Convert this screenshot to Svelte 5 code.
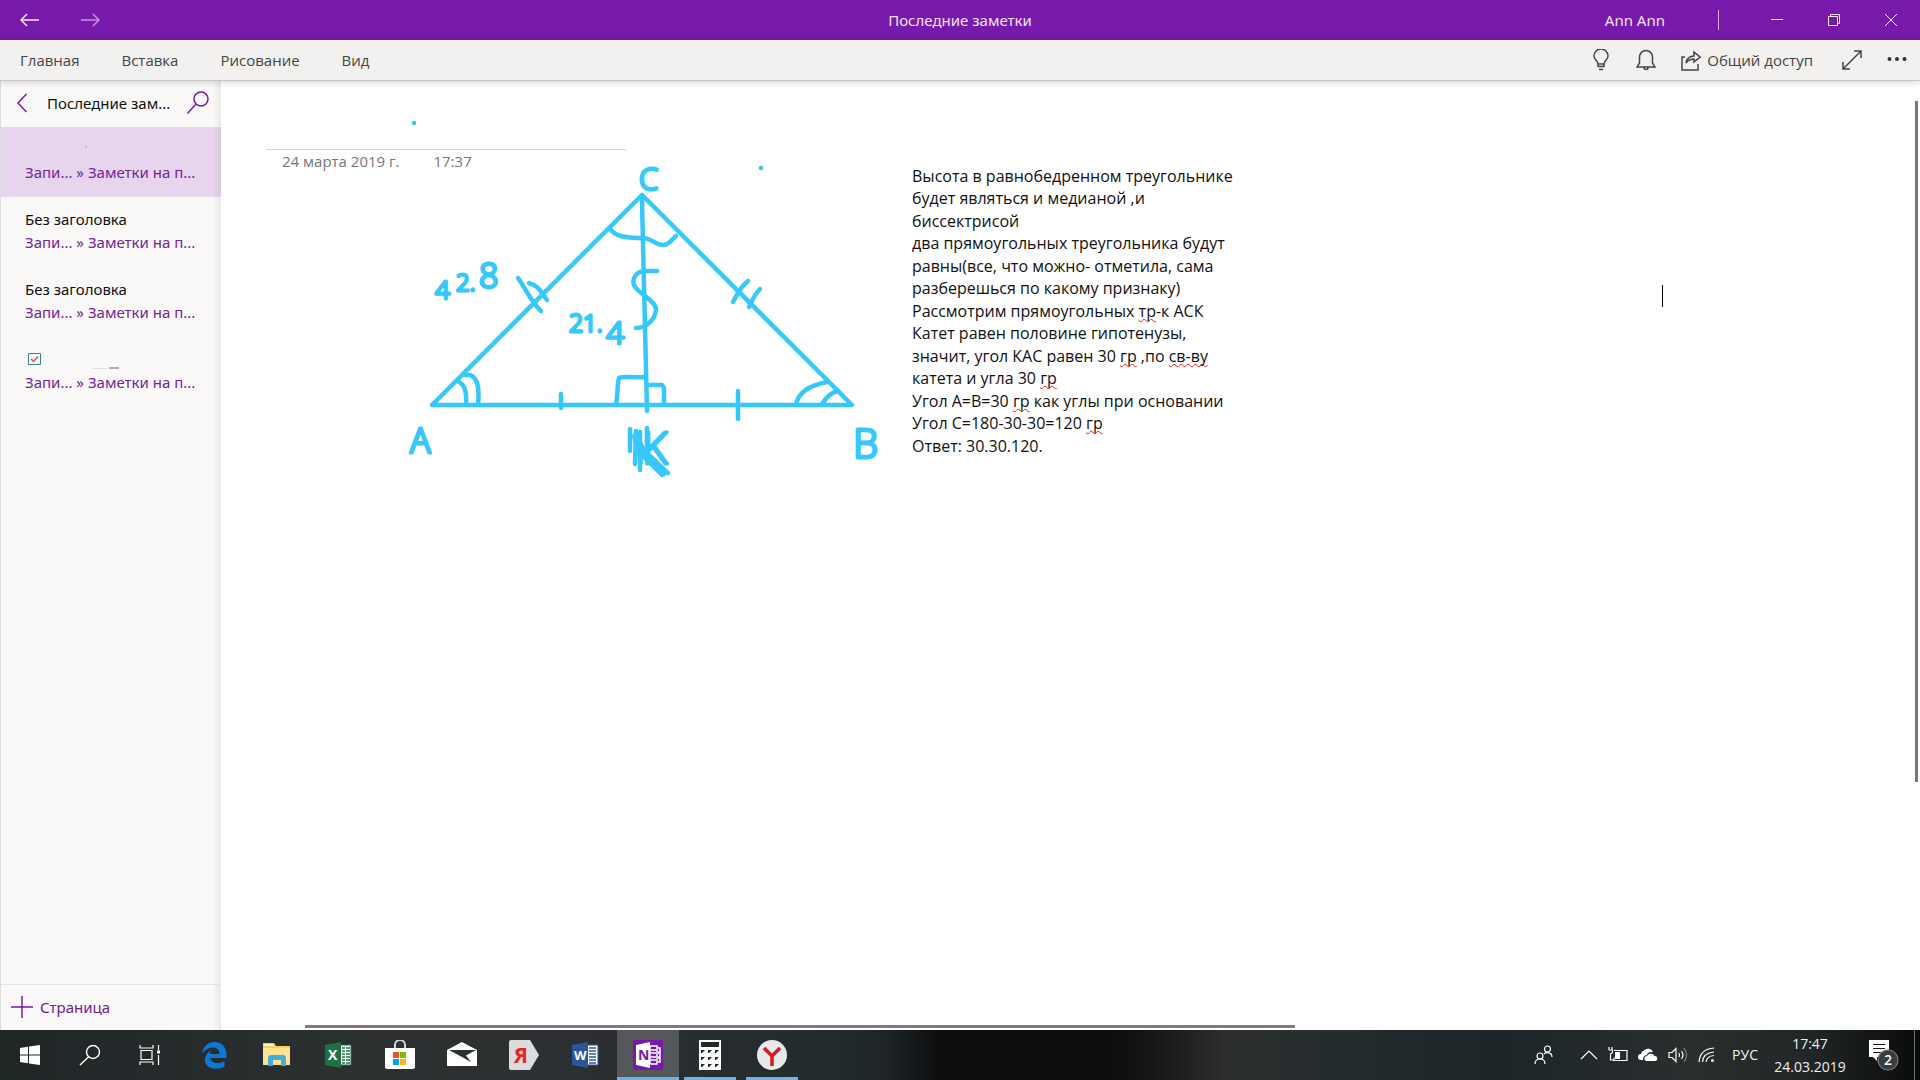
<script lang="ts">
  const tabs = ['Главная', 'Вставка', 'Рисование', 'Вид'];

  const pages = [
    { title: '', kind: 'blank', active: true },
    { title: 'Без заголовка', kind: 'text', active: false },
    { title: 'Без заголовка', kind: 'text', active: false },
    { title: '', kind: 'check', active: false },
  ];

  // misspelled words carry the red underline
  const note = [
    [{ t: 'Высота в равнобедренном треугольнике' }],
    [{ t: 'будет являться и медианой ,и' }],
    [{ t: 'биссектрисой' }],
    [{ t: 'два прямоугольных треугольника будут' }],
    [{ t: 'равны(все, что можно- отметила, сама' }],
    [{ t: 'разберешься по какому признаку)' }],
    [{ t: 'Рассмотрим прямоугольных ' }, { t: 'тр', bad: true }, { t: '-к АСК' }],
    [{ t: 'Катет равен половине гипотенузы,' }],
    [{ t: 'значит, угол КАС равен 30 ' }, { t: 'гр', bad: true }, { t: ' ,по ' }, { t: 'св-ву', bad: true }],
    [{ t: 'катета и угла 30 ' }, { t: 'гр', bad: true }],
    [{ t: 'Угол А=В=30 ' }, { t: 'гр', bad: true }, { t: ' как углы при основании' }],
    [{ t: 'Угол С=180-30-30=120 ' }, { t: 'гр', bad: true }],
    [{ t: 'Ответ: 30.30.120.' }],
  ];
</script>

<div class="desktop">
  <header class="titlebar">
    <div class="nav">
      <button aria-label="Назад">
        <svg width="20" height="14" viewBox="0 0 20 14"><path d="M19 7H1M7 1L1 7l6 6" /></svg>
      </button>
      <button aria-label="Вперёд" class="dim">
        <svg width="20" height="14" viewBox="0 0 20 14"><path d="M1 7h18M13 1l6 6-6 6" /></svg>
      </button>
    </div>
    <h1>Последние заметки</h1>
    <div class="window-tools">
      <span class="user">Ann Ann</span>
      <span class="divider"></span>
      <button aria-label="Свернуть">
        <svg width="12" height="12" viewBox="0 0 12 12"><path d="M0 5.5h12" /></svg>
      </button>
      <button aria-label="Свернуть в окно">
        <svg width="12" height="12" viewBox="0 0 12 12"><path d="M.5 2.5h9v9h-9zM2.5 2.5v-2h9v9h-2" /></svg>
      </button>
      <button aria-label="Закрыть">
        <svg width="12" height="12" viewBox="0 0 12 12"><path d="M0 0l12 12M12 0L0 12" /></svg>
      </button>
    </div>
  </header>

  <nav class="ribbon">
    <div class="tabs">
      {#each tabs as tab}
        <button>{tab}</button>
      {/each}
    </div>
    <div class="actions">
      <button aria-label="Помощник" class="tell-me">
        <svg width="16" height="22" viewBox="0 0 16 22"><path d="M5 15c0-3-4-4-4-8a7 7 0 0 1 14 0c0 4-4 5-4 8zM5 17.5h6M6 20.5h4M5 15v3M11 15v3" /></svg>
      </button>
      <button aria-label="Уведомления">
        <svg width="20" height="22" viewBox="0 0 20 22"><path d="M1 18h18l-2.500-4V8a6.500 6.500 0 0 0-13 0v6zM8 18.500a2 2 0 0 0 4 0" /></svg>
      </button>
      <button class="share">
        <svg width="20" height="22" viewBox="0 0 20 22"><path d="M4 8H1v13h16v-6M5 14c1-5 4-7 8-7V3l6 5-6 5v-3c-3 0-6 1-8 4z" /></svg>
        <span>Общий доступ</span>
      </button>
      <button aria-label="На весь экран">
        <svg width="20" height="20" viewBox="0 0 20 20"><path d="M1 19L19 1M12 1h7v7M1 12v7h7" /></svg>
      </button>
      <button aria-label="Ещё" class="more">
        <svg width="20" height="8" viewBox="0 0 20 8"><circle cx="2.500" cy="3" r="2" /><circle cx="10" cy="3" r="2" /><circle cx="17.500" cy="3" r="2" /></svg>
      </button>
    </div>
  </nav>

  <div class="workspace">
    <aside class="sidebar">
      <div class="list-head">
        <button aria-label="К разделам">
          <svg width="11" height="20" viewBox="0 0 11 20"><path d="M10.500 1L2 10l8.500 9" /></svg>
        </button>
        <h2>Последние зам...</h2>
        <button aria-label="Поиск">
          <svg width="22" height="24" viewBox="0 0 22 24"><circle cx="14" cy="8" r="7" /><path d="M9 13L0.500 22.500" /></svg>
        </button>
      </div>
      <ul class="pages">
        {#each pages as page}
          <li class:active={page.active}>
            <div class="page-title">
              {#if page.kind === 'check'}
                <svg width="100" height="22" viewBox="0 0 100 22">
                  <path class="box" d="M3.500 5.500h12v11h-12z" />
                  <path class="tick" d="M6 11l2.500 2.500L13 8.500" />
                  <path class="dash-light" d="M68 20.500h14" />
                  <path class="dash" d="M84 20h10" />
                </svg>
              {:else if page.kind === 'blank'}
                <svg width="100" height="22" viewBox="0 0 100 22"><circle class="speck" cx="61" cy="9" r="1" /></svg>
              {:else}
                {page.title}
              {/if}
            </div>
            <a href="#page">Запи... » Заметки на п...</a>
          </li>
        {/each}
      </ul>
      <button class="add-page">
        <svg width="22" height="22" viewBox="0 0 22 22"><path d="M11 0v22M0 11h22" /></svg>
        <span>Страница</span>
      </button>
    </aside>

    <main class="canvas">
      <div class="stamp"><span>24 марта 2019 г.</span><span>17:37</span></div>

      <svg class="ink" width="520" height="400" viewBox="380 100 520 400">
        <g class="dots">
          <circle cx="414" cy="123" r="2.300" />
          <circle cx="761" cy="168" r="2.300" />
        </g>
        <g class="strokes">
          <path d="M432 405L642 195L852 405Z" />
          <path d="M642 196C643 260 645 320 647 411" />
          <path d="M610 228C613 236 625 238 642 238C653 238 655 246 664 245C670 244 672 239 676 236" />
          <path d="M657 271H646C635 271 631 280 635 287C641 295 657 302 656 310C655 319 647 328 636 328" />
          <path d="M518 278C526 289 531 302 541 311M529 283C539 286 541 292 547 300" />
          <path d="M748 281C740 287 737 295 733 302M760 289C754 295 752 301 749 307" />
          <path d="M459 382C465 385 467 393 466 405M465 375C477 373 480 386 478 405" />
          <path d="M561 394v14M738 391v28" />
          <path d="M616 405C618 395 617 385 619 378C625 376 638 378 645 377M647 385H662L664 388V404" />
          <path d="M796 404C799 393 807 386 827 382M822 404C827 396 832 392 838 391" />
        </g>
        <g class="letters">
          <text x="639" y="190" font-size="31">C</text>
          <text x="410" y="453" font-size="34">A</text>
          <text x="853" y="458" font-size="40">B</text>
          <text x="435" y="299" font-size="26">4</text>
          <text x="456" y="291" font-size="24">2.</text>
          <text x="479" y="288" font-size="34">8</text>
          <text x="569" y="332" font-size="25">2</text>
          <text x="583" y="332" font-size="24">1.</text>
          <text x="606" y="344" font-size="32">4</text>
          <text x="642" y="464" font-size="44">K</text>
        </g>
        <g class="scribble">
          <path d="M630 429V451M636 431L635 464M640 432L640 470M636 434L646 455M647 428V452" />
          <path d="M634 436L641 462M644 450L668 473M643 456L662 475M645 456L664 474M648 450L664 434" />
        </g>
      </svg>

      <div class="note">
        {#each note as line}
          <p>{#each line as part}{#if part.bad}<span class="bad">{part.t}</span>{:else}{part.t}{/if}{/each}</p>
        {/each}
      </div>
      <div class="caret"></div>
      <div class="scroll-y"></div>
      <div class="scroll-x"></div>
    </main>
  </div>

  <footer class="taskbar">
    <div class="apps">
      <button aria-label="Пуск" class="system">
        <svg width="30" height="30" viewBox="0 0 30 30"><path d="M5 8l8-1.200V14.500H5zM14 6.600L25 5v9.500H14zM5 15.500h8v7.800L5 22zM14 15.500h11V25l-11-1.600z" fill="#fff" /></svg>
      </button>
      <button aria-label="Поиск в Windows" class="system">
        <svg width="30" height="30" viewBox="0 0 30 30" stroke="#fff" stroke-width="1.400"><circle cx="18" cy="12" r="6.500" /><path d="M13.500 17L5 25" /></svg>
      </button>
      <button aria-label="Представление задач" class="system">
        <svg width="30" height="30" viewBox="0 0 30 30" stroke="#fff" stroke-width="1.200"><path d="M6 10.500h11v9H6zM5 5v3h13V5M5 25v-3h13v3M23.500 5v5M23.500 15v10" /><path d="M22 10.500h3v3h-3z" fill="#fff" stroke="none" /></svg>
      </button>
      <button aria-label="Edge" class="first-app">
        <svg width="30" height="30" viewBox="0 0 30 30"><path d="M3 13.500C4.500 6 9 2 15.500 2 23 2 27.500 7.500 27.500 14.500V18H11.500c.3 5.500 8 6.500 14 3v5.500C21 29 15.500 29.500 11 27.500 3.500 24 4.500 14 12.500 10.500c-1 1.200-1.400 2.300-1.500 3.500h9.500C20.500 5.500 9 5.500 3 13.500z" fill="#0a78d4" /></svg>
      </button>
      <button aria-label="Проводник">
        <svg width="30" height="30" viewBox="0 0 30 30"><path d="M2 3h11l2 3h14v19H2z" fill="#f5cf5c" /><path d="M2 8h27v17H2z" fill="#ffe393" /><path d="M3 4h9v2H3z" fill="#fff3c4" /><path d="M7 26V17l2-2h14l2 2v9h-5v-6h-8v6z" fill="#42add6" /></svg>
      </button>
      <button aria-label="Excel">
        <svg width="30" height="30" viewBox="0 0 30 30"><path d="M16 5h12v20H16z" fill="#fff" stroke="#1e7145" /><path d="M19 8h3M23 8h4M19 11h3M23 11h4M19 14h3M23 14h4M19 17h3M23 17h4M19 20h3M23 20h4M19 23h3M23 23h4" stroke="#1e7145" stroke-width="1.500" /><path d="M2 5l16-3v26L2 25z" fill="#1e7145" /><text x="5" y="20" class="logo" font-size="14">X</text></svg>
      </button>
      <button aria-label="Магазин">
        <svg width="30" height="30" viewBox="0 0 30 30"><path d="M10 8V5a5 5 0 0 1 10 0v3" stroke="#d8d8d8" stroke-width="2" /><path d="M0 8h30v20l-2 1H2l-2-1z" fill="#fff" /><path d="M8 12h6v6H8z" fill="#f25022" /><path d="M15 12h6v6h-6z" fill="#7fba00" /><path d="M8 19h6v6H8z" fill="#00a4ef" /><path d="M15 19h6v6h-6z" fill="#ffb900" /></svg>
      </button>
      <button aria-label="Почта">
        <svg width="30" height="30" viewBox="0 0 30 30"><path d="M0 10L15 2l15 8v16H0z" fill="#fff" /><path d="M2 10h27l-10 5.500 5 6.500-9-5z" fill="#2c3031" /></svg>
      </button>
      <button aria-label="Яндекс">
        <svg width="30" height="30" viewBox="0 0 30 30"><path d="M2 0h19l9 15-9 15H2q-2 0-2-2V2q0-2 2-2z" fill="#dcdcdc" /><text x="5" y="23" class="logo ya" font-size="21">Я</text></svg>
      </button>
      <button aria-label="Word">
        <svg width="30" height="30" viewBox="0 0 30 30"><path d="M16 5h11v20H16z" fill="#fff" stroke="#2b579a" /><path d="M18 8h7M18 11h7M18 14h7M18 17h7M18 20h7M18 23h7" stroke="#2b579a" stroke-width="1.500" /><path d="M1 5l16-3v26L1 25z" fill="#2b579a" /><text x="3" y="20" class="logo" font-size="13">W</text></svg>
      </button>
      <button aria-label="OneNote" class="current">
        <svg width="30" height="30" viewBox="0 0 30 30"><path d="M0 0h30v30H0z" fill="#7719aa" /><path d="M17 6h7v18h-7z" stroke="#fff" stroke-width="1.500" /><path d="M18 10h5M18 13h5M18 17h5M18 20h5M25 8h2v4h-2M25 13h2v4h-2M25 18h2v4h-2" stroke="#fff" stroke-width="1.500" /><path d="M3 5l14-3v26L3 25z" fill="#fff" /><text x="5" y="20" class="logo one" font-size="14">N</text></svg>
      </button>
      <button aria-label="Калькулятор" class="open">
        <svg width="30" height="30" viewBox="0 0 30 30"><path d="M4 0h22v30H4z" fill="#fff" /><path d="M6 2h18v5H6zM6 10h4l-3 3H6zM13 10h4l-3 3h-1zM20 10h4l-3 3h-1zM6 17h4l-3 3H6zM13 17h4l-3 3h-1zM20 17h4l-3 3h-1zM6 24h4l-3 3H6zM13 24h4l-3 3h-1zM20 24h4l-3 3h-1z" fill="#22282a" /></svg>
      </button>
      <button aria-label="Яндекс Браузер" class="open">
        <svg width="30" height="30" viewBox="0 0 30 30"><circle cx="15" cy="15" r="15" fill="#e9e9e9" /><path d="M7 8l8 8 8-8M15 16v10" stroke="#cf1f24" stroke-width="3.500" /></svg>
      </button>
    </div>
    <div class="tray">
      <button aria-label="Люди" class="people">
        <svg width="20" height="20" viewBox="0 0 20 20"><circle cx="13.500" cy="4" r="3" /><circle cx="6" cy="11" r="3" /><path d="M1 19c0-3 2-5 5-5s5 2 5 5M10 9c2-2 8-2 8 3" /></svg>
      </button>
      <button aria-label="Скрытые значки">
        <svg width="18" height="10" viewBox="0 0 18 10"><path d="M1 9l8-8 8 8" /></svg>
      </button>
      <button aria-label="Батарея">
        <svg width="20" height="16" viewBox="0 0 20 16"><path d="M6 3.500h13v10H6v-3M19 6.500v4M1 0v2.500M4 0v2.500M.5 3h4v2.500l-2 1.500v6H6" /><path d="M7 5h5v7H7z" fill="#fff" stroke="none" /></svg>
      </button>
      <button aria-label="OneDrive">
        <svg width="20" height="14" viewBox="0 0 20 14"><path d="M5 12H3a3 3 0 0 1 0-6 4 4 0 0 1 3-3.500 5.500 5.500 0 0 1 9 1.500C10 3.500 9 6 9 7c-3 0-4 3-4 5z" fill="#fff" stroke="none" /><path d="M8 13a2.600 2.600 0 0 1 1-5 4 4 0 0 1 7.500 0A2.500 2.500 0 0 1 17 13z" fill="#fff" stroke="none" /></svg>
      </button>
      <button aria-label="Громкость">
        <svg width="20" height="16" viewBox="0 0 20 16"><path d="M1 5.500h3l4-4v13l-4-4H1zM11 6q1 2 0 4M13.500 4q3 4 0 8" /><path d="M16 1q5 7 0 14" opacity="0.400" /></svg>
      </button>
      <button aria-label="Сеть">
        <svg width="18" height="16" viewBox="0 0 18 16"><path d="M1 15Q2 2 16 1M4.500 15Q5 6 16 5M8 15Q9 9 16 8.500" /><circle cx="14.500" cy="13.500" r="1.500" fill="#fff" stroke="none" /></svg>
      </button>
      <button class="lang">РУС</button>
      <button class="clock"><span>17:47</span><span>24.03.2019</span></button>
      <button class="notices" aria-label="Центр уведомлений">
        <svg width="32" height="32" viewBox="0 0 32 32"><path d="M1 1h20v17H9v4l-4-4H1z" fill="#fff" stroke="none" /><path d="M5 5.500h12M5 9.500h12M5 13.500h8" stroke="#16191a" /><circle cx="20" cy="21" r="10" fill="#3a3d3e" stroke="#777" /><text x="16" y="26" font-size="14" font-weight="600">2</text></svg>
      </button>
      <button class="show-desktop" aria-label="Свернуть все окна"></button>
    </div>
  </footer>
</div>

<style>
  :global(body) {
    margin: 0;
  }

  .desktop {
    display: flex;
    flex-direction: column;
    height: 100vh;
    font-family: 'Open Sans', 'Noto Sans', sans-serif;
    font-size: 15px;
    line-height: 20px;
    color: #111;
    background: #fff;
  }

  button {
    display: flex;
    align-items: center;
    justify-content: center;
    padding: 0;
    border: none;
    background: none;
    color: inherit;
    font: inherit;
  }

  svg {
    display: block;
    flex: none;
    fill: none;
  }

  h1,
  h2,
  p,
  ul {
    margin: 0;
    padding: 0;
    font-size: inherit;
    font-weight: 400;
  }

  .titlebar {
    display: grid;
    grid-template-columns: 1fr auto 1fr;
    align-items: center;
    height: 40px;
    background: #7719aa;
    color: #f3e4fa;
    font-family: 'Noto Sans', sans-serif;
  }

  .titlebar svg {
    stroke: #f8e8ff;
  }

  .nav {
    display: flex;
    gap: 40px;
    padding-left: 20px;
  }

  .nav svg {
    stroke-width: 1.5;
  }

  .nav .dim {
    opacity: 0.6;
  }

  .window-tools {
    display: flex;
    align-items: center;
    justify-content: flex-end;
    padding-right: 1px;
  }

  .window-tools button {
    width: 57px;
    height: 40px;
  }

  .divider {
    width: 1px;
    height: 20px;
    margin: 0 29px 0 53px;
    background: #d9b3ec;
  }

  .ribbon {
    position: relative;
    z-index: 2;
    display: flex;
    justify-content: space-between;
    height: 40px;
    background: #f2f1ef;
    border-bottom: 1px solid #c8c6c4;
    box-shadow: 0 2px 6px rgba(0, 0, 0, 0.15);
    color: #444;
  }

  .ribbon svg {
    stroke: #444;
    stroke-width: 1.5;
  }

  .tabs {
    display: flex;
    gap: 42px;
    padding-left: 20px;
  }

  .actions {
    display: flex;
    align-items: center;
    gap: 25px;
    padding-right: 13px;
  }

  .tell-me {
    margin-right: 2px;
  }

  .share {
    gap: 6px;
    margin-right: 4px;
  }

  .ribbon .more svg {
    fill: #333;
    stroke: none;
  }

  .workspace {
    display: flex;
    flex: 1;
    min-height: 0;
  }

  .sidebar {
    display: flex;
    flex-direction: column;
    width: 221px;
    box-sizing: border-box;
    border-left: 1px solid #dcdcdc;
    background: linear-gradient(to right, #faf9f8 212px, #e9e8e7);
    font-family: 'Noto Sans', sans-serif;
  }

  .sidebar svg {
    stroke: #7719aa;
    stroke-width: 1.5;
  }

  .list-head {
    display: flex;
    align-items: center;
    gap: 20px;
    height: 44px;
    padding: 0 0 2px 15px;
  }

  .list-head h2 {
    flex: none;
    width: 120px;
    white-space: nowrap;
  }

  .pages {
    flex: 1;
    list-style: none;
  }

  .pages li {
    height: 70px;
    box-sizing: border-box;
    padding: 11px 0 0 24px;
    white-space: nowrap;
  }

  .pages li.active {
    background: linear-gradient(to right, #e6d5ec 212px, #d6c6dc);
  }

  .page-title {
    height: 22px;
    line-height: 22px;
  }

  .pages a {
    color: #7223a0;
    line-height: 24px;
    text-decoration: none;
  }

  .pages .box {
    stroke: #2f8590;
    stroke-width: 1;
  }

  .pages .tick {
    stroke: #d9534f;
  }

  .pages .dash-light {
    stroke: #ddd;
    stroke-width: 1;
  }

  .pages .dash {
    stroke: #666;
    stroke-width: 1;
  }

  .pages .speck {
    fill: #b9a9c4;
    stroke: none;
  }

  .add-page {
    justify-content: flex-start;
    gap: 7px;
    height: 46px;
    padding: 0 0 2px 10px;
    border-top: 1px solid #e6e4e2;
    color: #6b2390;
  }

  .canvas {
    position: relative;
    flex: 1;
    background: #fff;
  }

  .stamp {
    position: absolute;
    left: 45px;
    top: 68px;
    display: flex;
    gap: 34px;
    width: 360px;
    box-sizing: border-box;
    padding: 1px 0 0 16px;
    border-top: 1px solid #d8d8d8;
    color: #767676;
    white-space: nowrap;
  }

  .ink {
    position: absolute;
    left: 159px;
    top: 19px;
  }

  .dots {
    fill: #33c6ee;
  }

  .strokes,
  .scribble {
    stroke: #36c8fa;
    stroke-width: 4.5;
    stroke-linecap: round;
    stroke-linejoin: round;
  }

  .letters {
    fill: #36c8fa;
    stroke: #36c8fa;
    stroke-width: 3;
    stroke-linejoin: round;
    font-family: 'Open Sans', sans-serif;
    font-weight: 300;
  }

  .note {
    position: absolute;
    left: 691px;
    top: 84px;
    font-size: 16px;
    line-height: 22px;
    white-space: nowrap;
  }

  .note p:nth-child(even) {
    padding-bottom: 1px;
  }

  .bad {
    text-decoration: underline wavy #e02020 1px;
    text-decoration-skip-ink: none;
  }

  .caret {
    position: absolute;
    left: 1441px;
    top: 204px;
    width: 1px;
    height: 22px;
    background: #000;
  }

  .scroll-y {
    position: absolute;
    right: 2px;
    top: 20px;
    width: 3px;
    height: 681px;
    background: #7a7677;
  }

  .scroll-x {
    position: absolute;
    left: 84px;
    bottom: 2px;
    width: 990px;
    height: 3px;
    background: #7f7b7c;
  }

  .taskbar {
    display: flex;
    justify-content: space-between;
    height: 50px;
    background: linear-gradient(to right, #1f2626, #2d3132 20%, #2b2f31 32%, #232b2d 43%, #1f2527 46%, #0c0d0f 49%, #0d0f0e 58%, #141617 60%, #2d2f2f 64%, #232b2d 70%, #1c2528 78%, #2a2e2f 88%, #222627 94%, #0a0b0b);
    color: #f0f0f0;
  }

  .apps,
  .tray {
    display: flex;
  }

  .apps button {
    width: 62px;
    border-top: 3px solid transparent;
    border-bottom: 3px solid transparent;
  }

  .apps .system {
    width: 60px;
  }

  .apps .first-app {
    margin-left: 3px;
  }

  .apps .open {
    width: 52px;
    margin: 0 5px;
    border-bottom-color: #76b0e0;
  }

  .apps .current {
    background: #54585a;
    border-top: 3px solid #54585a;
    border-bottom-color: #76b0e0;
  }

  .logo {
    fill: #fff;
    font-family: 'Open Sans', sans-serif;
    font-weight: 700;
  }

  .logo.ya {
    fill: #e52620;
  }

  .logo.one {
    fill: #7719aa;
  }

  .tray {
    align-items: center;
    gap: 10px;
    font-size: 14px;
  }

  .tray svg {
    stroke: #fff;
    stroke-width: 1.2;
  }

  .tray text {
    fill: #fff;
    stroke: none;
  }

  .people {
    margin-right: 16px;
  }

  .lang {
    margin-left: 6px;
  }

  .clock {
    flex-direction: column;
    width: 84px;
    margin-right: 6px;
    line-height: 23px;
  }

  .notices {
    margin-right: 4px;
  }

  .show-desktop {
    width: 6px;
    height: 50px;
    border-left: 1px solid #6b6e6f;
  }
</style>
